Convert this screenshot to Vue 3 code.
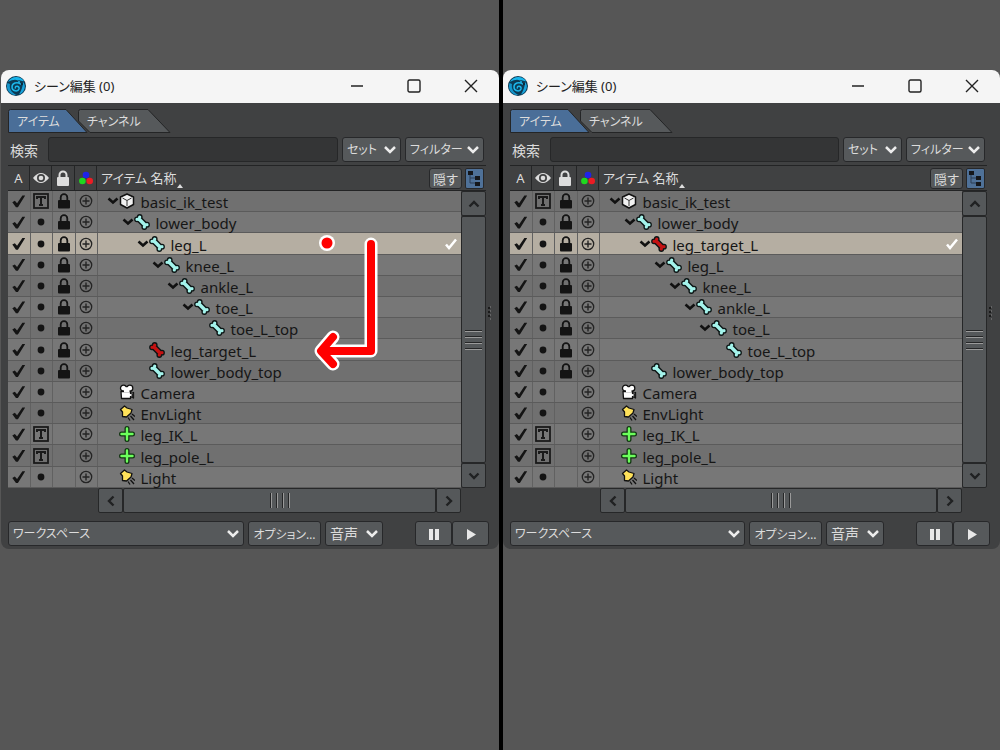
<script setup>
import { ref } from 'vue';

const lightItems = [
  { name: 'Camera', depth: 0, icon: 'camera', view: 'dot' },
  { name: 'EnvLight', depth: 0, icon: 'light', view: 'dot' },
  { name: 'leg_IK_L', depth: 0, icon: 'null', view: 'box' },
  { name: 'leg_pole_L', depth: 0, icon: 'null', view: 'box' },
  { name: 'Light', depth: 0, icon: 'light', view: 'dot' },
];

const root = [
  { name: 'basic_ik_test', depth: 0, icon: 'cube', view: 'box', lock: true, open: true },
  { name: 'lower_body', depth: 1, icon: 'bone', view: 'dot', lock: true, open: true },
];

const bone = (name, depth, open = true, icon = 'bone') => ({
  name, depth, open, icon, view: 'dot', lock: true,
});

const panels = ref([
  {
    id: 'before',
    arrow: true,
    rows: [
      ...root,
      { ...bone('leg_L', 2), selected: true },
      bone('knee_L', 3),
      bone('ankle_L', 4),
      bone('toe_L', 5),
      bone('toe_L_top', 6, false),
      bone('leg_target_L', 2, false, 'target'),
      bone('lower_body_top', 2, false),
      ...lightItems,
    ],
  },
  {
    id: 'after',
    arrow: false,
    rows: [
      ...root,
      { ...bone('leg_target_L', 2, true, 'target'), selected: true },
      bone('leg_L', 3),
      bone('knee_L', 4),
      bone('ankle_L', 5),
      bone('toe_L', 6),
      bone('toe_L_top', 7, false),
      bone('lower_body_top', 2, false),
      ...lightItems,
    ],
  },
]);
</script>

<template>
  <main class="compare">
    <section v-for="p in panels" :key="p.id" class="pane">
      <div class="window">
        <header class="titlebar">
          <svg class="logo" viewBox="0 0 20 20">
            <circle cx="10" cy="10" r="10" fill="#0c3a54" />
            <path d="M2 6C5 0 14 -1 18 5C16 6 15 3.500 12 4.500C9 3 6 4 2 6Z" fill="#18b4ea" />
            <path d="M17 6C21 10 18 17 13 18.500C15 15 17 11 17 6Z" fill="#18a4dc" />
            <path d="M1.500 7C-1 14 5 20 11 19C6 17 3 13 4 8" fill="#1596cc" />
            <path d="M14.500 8C11 5.500 6 7 6 11C6 15.500 12 16 13 13C13.600 10 9.500 9 9.300 12" fill="none" stroke="#1cb6ea" stroke-width="1.500" stroke-linecap="round" />
            <circle cx="13" cy="6" r="1" fill="#1cb6ea" />
            <circle cx="16" cy="8" r="1" fill="#08202e" />
          </svg>
          <h1>シーン編集 (0)</h1>
          <button type="button" class="win-btn" aria-label="最小化">
            <svg viewBox="0 0 14 14"><path d="M1 7H13" /></svg>
          </button>
          <button type="button" class="win-btn" aria-label="最大化">
            <svg viewBox="0 0 14 14"><rect x="1" y="1" width="12" height="12" rx="1.5" /></svg>
          </button>
          <button type="button" class="win-btn" aria-label="閉じる">
            <svg viewBox="0 0 14 14"><path d="M1 1L13 13M13 1L1 13" /></svg>
          </button>
        </header>

        <div class="body">
          <nav class="tabs">
            <button type="button" class="tab">
              <svg class="tab-bg" viewBox="0 0 80 24"><path class="active" d="M.5 23.5V2.5Q.5.5 2.5.5H58L79 23.5Z" /></svg>
              <span>アイテム</span>
            </button>
            <button type="button" class="tab second">
              <svg class="tab-bg wide" viewBox="0 0 94 24"><path d="M12 23.5L.5 12V2.5Q.5.5 2.5.5H70L92 23.5Z" /></svg>
              <span>チャンネル</span>
            </button>
          </nav>

          <div class="search">
            <label :for="p.id + '-q'">検索</label>
            <input :id="p.id + '-q'" type="text" />
            <div class="pick set">
              <select aria-label="セット"><option>セット</option></select>
              <svg class="chev" viewBox="0 0 12 8"><path d="M1 1L6 6L11 1" /></svg>
            </div>
            <div class="pick filter">
              <select aria-label="フィルター"><option>フィルター</option></select>
              <svg class="chev" viewBox="0 0 12 8"><path d="M1 1L6 6L11 1" /></svg>
            </div>
          </div>

          <div class="head">
            <span class="col">A</span>
            <span class="col">
              <svg width="16" height="12" viewBox="0 0 16 12"><path d="M0 6Q8-4 16 6Q8 16 0 6Z" fill="#ddd" /><circle cx="8" cy="6" r="4" fill="#404142" /><circle cx="8" cy="6" r="2.3" fill="#ddd" /></svg>
            </span>
            <span class="col lock-col">
              <svg width="14" height="16" viewBox="0 0 14 16"><path d="M3.500 8V5a3.500 3.500 0 0 1 7 0V8" fill="none" stroke="#ddd" stroke-width="2" /><rect x="1" y="7" width="12" height="9" rx="1" fill="#ddd" /></svg>
            </span>
            <span class="col">
              <svg width="14" height="14" viewBox="0 0 14 14"><circle cx="7" cy="4" r="3.3" fill="#1f22e8" /><circle cx="3.4" cy="10" r="3.3" fill="#1fd81f" /><circle cx="10.7" cy="10" r="3.3" fill="#ec1c24" /></svg>
            </span>
            <span class="head-name">アイテム 名称<svg width="6" height="4" viewBox="0 0 6 4"><path d="M3 0L6 4H0Z" fill="#ddd" /></svg></span>
            <button type="button" class="btn hide">隠す</button>
            <button type="button" class="tree-btn" aria-label="ツリー表示">
              <svg viewBox="0 0 16 18"><path d="M4 5V14H10M4 9H10" fill="none" stroke="#2c3f55" /><path d="M2 2H7V6H2ZM9 7H14V11H9ZM9 13H14V17H9Z" fill="#15171b" /></svg>
            </button>
          </div>

          <div class="list">
            <table>
              <tbody>
                <tr v-for="row in p.rows" :key="row.name" :class="{ selected: row.selected }">
                  <td class="c">
                    <input type="checkbox" class="tick" checked :aria-label="row.name" />
                  </td>
                  <td class="c">
                    <svg v-if="row.view === 'dot'" width="8" height="8" viewBox="0 0 8 8"><circle cx="4" cy="4" r="3.4" fill="#141414" /></svg>
                    <svg v-else width="16" height="16" viewBox="0 0 16 16"><rect x="1" y="1" width="14" height="14" fill="none" stroke="#1a1a1a" stroke-width="1.8" /><path d="M4 6V4H12V6M8 4V12M6 12H10" fill="none" stroke="#1a1a1a" stroke-width="2" /></svg>
                  </td>
                  <td class="c lock-col">
                    <svg v-if="row.lock" width="14" height="16" viewBox="0 0 14 16"><path d="M3.700 8V4.500a3.300 3.300 0 0 1 6.600 0V8" fill="none" stroke="#141414" stroke-width="1.8" /><rect x="1" y="7" width="12" height="8.500" rx="1" fill="#141414" /></svg>
                  </td>
                  <td class="c">
                    <svg width="14" height="14" viewBox="0 0 14 14"><circle cx="7" cy="7" r="5.700" fill="none" stroke="#242424" stroke-width="1.3" /><path d="M7 3.500V10.500M3.500 7H10.500" stroke="#242424" stroke-width="1.4" /></svg>
                  </td>
                  <td class="name">
                    <div class="item" :style="{ paddingLeft: row.depth * 15 + 'px' }">
                      <svg class="fold" viewBox="0 0 12 8"><path v-if="row.open" d="M1.500 1.500L6 5.500L10.500 1.500" fill="none" stroke="#111" stroke-width="2.6" /></svg>
                      <svg v-if="row.icon === 'cube'" class="ico" viewBox="0 0 16 16"><path d="M8 1L14.500 4V11.500L8 15L1.500 11.500V4Z" fill="#f2f2f2" stroke="#111" stroke-width="1.500" stroke-linejoin="round" /><path d="M3.500 5L8 7.500L12.500 5M8 7.500V13" fill="none" stroke="#333" /></svg>
                      <svg v-else-if="row.icon === 'bone' || row.icon === 'target'" class="ico" viewBox="0 0 16 16">
                        <g stroke-linecap="round" stroke="#0c1414">
                          <path d="M5 5L11 11" stroke-width="6.400" />
                          <path d="M5.700 3H5.710M3 5.300H3.010M13 10.700H13.010M10.300 13H10.310" stroke-width="5.800" />
                        </g>
                        <g stroke-linecap="round" :stroke="row.icon === 'bone' ? '#a4f4ec' : '#c41212'">
                          <path d="M5 5L11 11" stroke-width="3.600" />
                          <path d="M5.700 3H5.710M3 5.300H3.010M13 10.700H13.010M10.300 13H10.310" stroke-width="3.200" />
                        </g>
                      </svg>
                      <svg v-else-if="row.icon === 'camera'" class="ico" viewBox="0 0 16 16"><circle cx="4.500" cy="4.200" r="3" fill="#fff" stroke="#111" stroke-width="1.300" /><circle cx="10.800" cy="4.200" r="3" fill="#fff" stroke="#111" stroke-width="1.300" /><path d="M2 7.500H11.500V9.500L14.500 8.500V14L11.500 12.500V14.500H2.500Z" fill="#fff" stroke="#111" stroke-width="1.300" stroke-linejoin="round" /><path d="M5 4.500H10.500M5 7H10.500" stroke="#fff" stroke-width="2.500" /><path d="M12.500 9.500H14.500V13.500H12.500Z" fill="#222" /></svg>
                      <svg v-else-if="row.icon === 'light'" class="ico" viewBox="0 0 16 16"><path d="M1.500 4.500L5.500 1L8 3L13 4.500L12 8L7.500 12L3.500 11.500L3.500 7Z" fill="#ffe25a" stroke="#111" stroke-width="1.300" stroke-linejoin="round" /><path d="M9 12.500L11 15.500M11.500 11L15 15M13 9L16 11.500" stroke="#111" stroke-width="1.300" /></svg>
                      <svg v-else class="ico" viewBox="0 0 16 16"><path d="M8 2.500V13.500M2.500 8H13.500" stroke="#123512" stroke-width="5" stroke-linecap="round" /><path d="M8 2.500V13.500M2.500 8H13.500" stroke="#6cff5c" stroke-width="2.400" stroke-linecap="round" /></svg>
                      <span class="label">{{ row.name }}</span>
                      <svg v-if="row.selected" class="mark" viewBox="0 0 14 14"><path d="M2 7.500L5 11L12 2.500" fill="none" stroke="#fff" stroke-width="2.500" /></svg>
                    </div>
                  </td>
                </tr>
              </tbody>
            </table>
            <div class="vbar">
              <button type="button" aria-label="上へ"><svg class="arrow" viewBox="0 0 12 8"><path d="M1.500 6.500L6 2L10.500 6.500" /></svg></button>
              <div class="track"><i v-for="n in 4" :key="n"></i></div>
              <button type="button" aria-label="下へ"><svg class="arrow" viewBox="0 0 12 8"><path d="M1.500 1.500L6 6L10.500 1.500" /></svg></button>
            </div>
            <svg class="grip" viewBox="0 0 4 14"><path d="M0 2H2M0 6H2M0 10H2" stroke="#1b1b1b" stroke-width="2" /><path d="M2 1H3M2 5H3M2 9H3M2 13H3" stroke="#8a8a8a" /></svg>
            <svg v-if="p.arrow" class="drag" viewBox="0 0 70 140">
              <g fill="none" stroke-linecap="round" stroke-linejoin="round">
                <path d="M15 10H15.010" stroke="#fff" stroke-width="16" />
                <path d="M59 11V118H10M21 104L9 118L21 131" stroke="#fff" stroke-width="13" />
                <path d="M15 10H15.010" stroke="#f00" stroke-width="11" />
                <path d="M59 11V118H10M21 104L9 118L21 131" stroke="#f00" stroke-width="8" />
              </g>
            </svg>
          </div>

          <div class="hbar">
            <button type="button" aria-label="左へ"><svg class="arrow" viewBox="0 0 8 12"><path d="M6.500 1.500L2 6L6.500 10.500" /></svg></button>
            <div class="track"><i v-for="n in 4" :key="n"></i></div>
            <button type="button" aria-label="右へ"><svg class="arrow" viewBox="0 0 8 12"><path d="M1.500 1.500L6 6L1.500 10.500" /></svg></button>
          </div>
        </div>

        <footer class="foot">
          <div class="pick work">
            <select aria-label="ワークスペース"><option>ワークスペース</option></select>
            <svg class="chev" viewBox="0 0 12 8"><path d="M1 1L6 6L11 1" /></svg>
          </div>
          <button type="button" class="btn option">オプション…</button>
          <div class="pick audio">
            <select aria-label="音声"><option>音声</option></select>
            <svg class="chev" viewBox="0 0 12 8"><path d="M1 1L6 6L11 1" /></svg>
          </div>
          <div class="player">
            <button type="button" class="btn play" aria-label="一時停止"><svg viewBox="0 0 12 12"><path d="M1 1H5V12H1ZM7 1H11V12H7Z" /></svg></button>
            <button type="button" class="btn play" aria-label="再生"><svg viewBox="0 0 12 12"><path d="M2 1L11 6.500L2 12Z" /></svg></button>
          </div>
        </footer>
      </div>
    </section>
  </main>
</template>

<style>
body {
  background: #565656;
}
</style>

<style scoped>
* {
  box-sizing: border-box;
}

.compare {
  display: grid;
  grid-template-columns: 498fr 501fr;
  min-height: 100vh;
  padding-left: 1px;
  font-family: "Noto Sans", "Noto Sans CJK JP", sans-serif;
  font-size: 13px;
  font-feature-settings: "palt";
  color: #dcdcdc;
}

.pane {
  padding-top: 70px;
}

.pane + .pane {
  border-left: 4px solid #000;
}

.window {
  background: #404142;
  border-radius: 8px;
  overflow: hidden;
}

button,
select {
  font: inherit;
  font-feature-settings: inherit;
  color: inherit;
  padding: 0;
  border: 0;
  background: none;
}

svg {
  display: block;
  flex: none;
}

.titlebar {
  display: flex;
  align-items: center;
  height: 33px;
  padding: 0 0 2px 5px;
  background: #f5f5f5;
  color: #222;
}

.logo {
  width: 20px;
  height: 20px;
}

h1 {
  flex: 1;
  margin: 0 0 0 8px;
  font-size: 13px;
  font-weight: 400;
  line-height: 20px;
}

.win-btn {
  display: flex;
  align-items: center;
  justify-content: center;
  width: 57px;
  height: 31px;
}

.win-btn svg {
  width: 14px;
  height: 14px;
  fill: none;
  stroke: #222;
  stroke-width: 1.4;
}

.body {
  padding: 6px 13px 0 7px;
}

.tabs {
  display: flex;
  height: 24px;
}

.tab {
  position: relative;
  width: 70px;
  height: 24px;
  padding-left: 9px;
  font-size: 12px;
  text-align: left;
}

.second {
  width: 94px;
}

.tab span {
  position: relative;
}

.tab-bg {
  position: absolute;
  left: 0;
  top: 0;
  width: 80px;
  height: 24px;
}

.wide {
  width: 94px;
}

.tab-bg path {
  fill: #56595b;
  stroke: #242526;
}

.tab-bg .active {
  fill: #4a6e98;
}

.search {
  display: flex;
  align-items: center;
  gap: 4px;
  height: 25px;
  margin-top: 4px;
  padding-right: 2px;
}

.search label {
  width: 36px;
  padding-left: 2px;
  font-size: 14px;
}

.search input {
  flex: 1;
  min-width: 0;
  height: 25px;
  border: 1px solid #262728;
  border-radius: 3px;
  background: #343536;
  color: #ddd;
}

.btn,
.pick {
  height: 25px;
  border: 1px solid #27282a;
  border-radius: 3px;
  background: #56595b;
  white-space: nowrap;
}

.pick {
  position: relative;
}

.pick select {
  width: 100%;
  height: 23px;
  padding: 0 18px 0 4px;
  appearance: none;
  font-size: 12px;
}

.chev {
  position: absolute;
  right: 4px;
  top: 8px;
  width: 12px;
  height: 8px;
  fill: none;
  stroke: #ececec;
  stroke-width: 2.5;
  pointer-events: none;
}

.set {
  width: 59px;
}

.filter {
  width: 79px;
}

.head {
  display: flex;
  align-items: center;
  height: 26px;
  margin-top: 3px;
  padding-right: 2px;
  border-top: 1px solid #232425;
  border-bottom: 1px solid #232425;
}

.col {
  display: flex;
  align-items: center;
  justify-content: center;
  width: 22px;
  height: 24px;
  border-right: 1px solid #242526;
}

.lock-col {
  width: 23px;
}

.head-name {
  display: flex;
  flex: 1;
  align-items: flex-end;
  padding-left: 4px;
  line-height: 20px;
}

.hide {
  width: 33px;
  height: 21px;
  margin-right: 3px;
  text-align: center;
}

.tree-btn {
  width: 19px;
  height: 21px;
  border: 1px solid #27282a;
  border-radius: 2px;
  background: #4f7198;
}

.tree-btn svg {
  width: 16px;
  height: 18px;
}

.list {
  position: relative;
  display: flex;
}

table {
  flex: 1;
  height: 297px;
  border-collapse: collapse;
  table-layout: fixed;
}

tr {
  background: #777;
}

tr:nth-child(odd) {
  background: #707070;
}

tr.selected {
  background: #b5aea2;
}

td {
  padding: 0;
  border-bottom: 1px solid #5b5b5b;
}

.c {
  width: 22px;
  border-right: 1px solid #616161;
}

.c.lock-col {
  width: 23px;
}

.c svg {
  margin: 0 auto;
}

.tick {
  display: block;
  width: 14px;
  height: 14px;
  margin: 0 auto;
  appearance: none;
}

.tick:checked {
  background: #141414;
  clip-path: polygon(4% 58%, 22% 48%, 38% 66%, 76% 10%, 96% 10%, 44% 94%, 30% 94%);
}

.item {
  display: flex;
  align-items: center;
  height: 20px;
}

.fold {
  width: 12px;
  height: 8px;
  margin-left: 9px;
}

.ico {
  width: 16px;
  height: 16px;
}

.label {
  flex: 1;
  padding: 3px 0 0 6px;
  font-size: 15px;
  line-height: 17px;
  color: #161616;
}

.mark {
  width: 14px;
  height: 14px;
  margin-right: 3px;
}

.vbar {
  display: flex;
  flex-direction: column;
  width: 25px;
}

.vbar button,
.hbar button,
.track {
  display: flex;
  align-items: center;
  justify-content: center;
  border: 1px solid #262728;
  border-radius: 2px;
  background: #55585a;
}

.vbar button {
  height: 25px;
}

.vbar .track {
  flex: 1;
  flex-direction: column;
  gap: 4px;
}

.vbar i {
  width: 17px;
  height: 2px;
  border-top: 1px solid #252627;
  border-bottom: 1px solid #9a9a9a;
}

.arrow {
  width: 12px;
  height: 8px;
  fill: none;
  stroke: #202122;
  stroke-width: 2.4;
}

.grip {
  position: absolute;
  right: -6px;
  top: 115px;
  width: 4px;
  height: 14px;
}

.drag {
  position: absolute;
  left: 304px;
  top: 42px;
  width: 70px;
  height: 140px;
}

.hbar {
  display: flex;
  height: 25px;
  margin: 0 25px 0 90px;
}

.hbar button {
  width: 25px;
}

.hbar .track {
  flex: 1;
  gap: 4px;
}

.hbar i {
  width: 2px;
  height: 15px;
  border-left: 1px solid #252627;
  border-right: 1px solid #9a9a9a;
}

.hbar .arrow {
  width: 8px;
  height: 12px;
}

.foot {
  display: flex;
  gap: 4px;
  padding: 8px 10px 3px 7px;
}

.work {
  flex: 1;
}

.option {
  width: 73px;
  font-size: 12px;
}

.audio {
  width: 58px;
}

.audio select {
  font-size: 14px;
}

.player {
  display: flex;
  margin-left: 28px;
}

.play {
  display: flex;
  align-items: center;
  justify-content: center;
  width: 37px;
}

.play svg {
  width: 12px;
  height: 12px;
  fill: #e8e8e8;
}
</style>
